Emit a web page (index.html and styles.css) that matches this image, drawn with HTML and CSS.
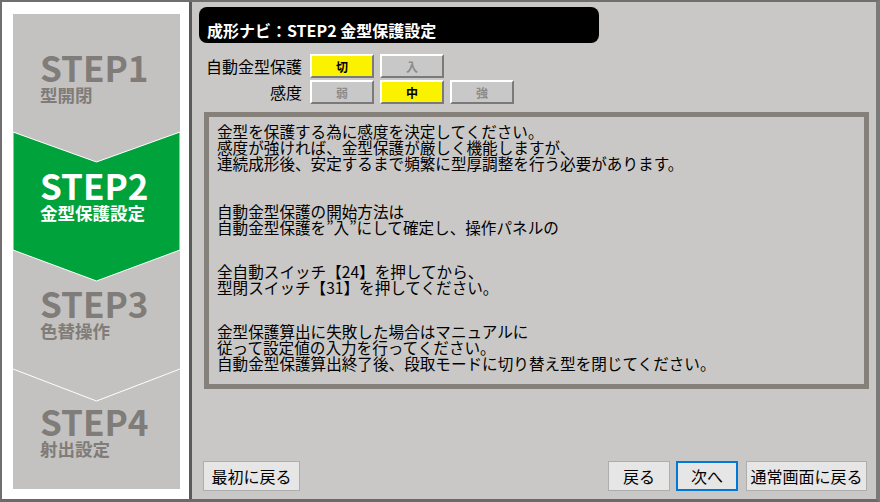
FILE: index.html
```html
<!DOCTYPE html>
<html lang="ja">
<head>
    <meta charset="UTF-8">
    <title>成形ナビ</title>
    <link rel="stylesheet" href="styles.css">
</head>
<body>
<div class="screen">
    <div class="side">
        <div class="steps">
            <svg class="steps-bg" width="167" height="475" viewBox="0 0 167 475">
                <polygon points="0,118 83.5,148 167,118 167,236 83.5,267 0,236" fill="#00a23b" stroke="#ffffff" stroke-width="1"/>
                <polyline points="0,355 83.5,387 167,355" fill="none" stroke="#ffffff" stroke-width="1"/>
            </svg>
            <div class="step">
                <div class="step-no">STEP1</div>
                <div class="step-name">型開閉</div>
            </div>
            <div class="step active">
                <div class="step-no">STEP2</div>
                <div class="step-name">金型保護設定</div>
            </div>
            <div class="step">
                <div class="step-no">STEP3</div>
                <div class="step-name">色替操作</div>
            </div>
            <div class="step">
                <div class="step-no">STEP4</div>
                <div class="step-name">射出設定</div>
            </div>
        </div>
    </div>

    <div class="main">
        <div class="title-bar">成形ナビ：STEP2 金型保護設定</div>

        <div class="options">
            <div class="opt-row">
                <span class="opt-label">自動金型保護</span>
                <button class="opt on">切</button>
                <button class="opt">入</button>
            </div>
            <div class="opt-row">
                <span class="opt-label">感度</span>
                <button class="opt">弱</button>
                <button class="opt on">中</button>
                <button class="opt">強</button>
            </div>
        </div>

        <div class="guide">
            <p>金型を保護する為に感度を決定してください。<br>感度が強ければ、金型保護が厳しく機能しますが、<br>連続成形後、安定するまで頻繁に型厚調整を行う必要があります。</p>
            <p class="gap1">自動金型保護の開始方法は<br>自動金型保護を”入”にして確定し、操作パネルの</p>
            <p class="gap2">全自動スイッチ【24】を押してから、<br>型閉スイッチ【31】を押してください。</p>
            <p class="gap2">金型保護算出に失敗した場合はマニュアルに<br>従って設定値の入力を行ってください。<br>自動金型保護算出終了後、段取モードに切り替え型を閉じてください。</p>
        </div>

        <div class="footer">
            <button class="nav-btn first">最初に戻る</button>
            <div class="nav-right">
                <button class="nav-btn back">戻る</button>
                <button class="nav-btn next">次へ</button>
                <button class="nav-btn home">通常画面に戻る</button>
            </div>
        </div>
    </div>
</div>
</body>
</html>
```

FILE: styles.css
```css
html, body { margin: 0; padding: 0; }
body { font-family: "Noto Sans CJK JP", "Noto Sans", sans-serif; background: #c9c8c6; }

.screen { width: 874px; height: 497px; display: flex; border-top: 2px solid #6f6f6f; border-left: 2px solid #6f6f6f; border-bottom: 3px solid #6a6a6a; border-right: 4px solid #7a7a7a; }

.side { width: 167px; background: #ffffff; padding: 12px 9px 10px 11px; flex-shrink: 0; }
.steps { position: relative; width: 167px; height: 438px; padding-top: 37px; background: #c4c2c0; }
.steps-bg { position: absolute; top: 0; left: 0; }
.step { position: relative; height: 118px; padding-left: 27px; color: #7f7c79; }
.step.active { color: #ffffff; }
.step-no { font-weight: bold; font-size: 35px; line-height: 32px; letter-spacing: 0; }
.step-name { font-weight: bold; font-size: 17.5px; line-height: 18px; margin-top: 3px; }

.main { flex: 1; display: flex; flex-direction: column; border-left: 3px solid #5a5a5a; background: #c9c8c6; }

.title-bar { margin: 5px 0 0 7px; width: 392px; height: 23px; padding: 13px 0 0 8px; background: #000000; color: #ffffff; border-radius: 8px; font-weight: bold; font-size: 16px; line-height: 20px; }

.options { margin: 11px 0 0 7px; display: flex; flex-direction: column; gap: 2px; }
.opt-row { display: flex; align-items: center; }
.opt-label { width: 103px; text-align: right; margin-right: 8px; font-size: 16px; color: #000000; }
.opt { width: 64px; height: 24px; margin-right: 6px; padding: 0; background: #c8c8c8; color: #8c8c8c; font-family: inherit; font-weight: bold; font-size: 12px; border: 2px solid; border-color: #ffffff #7a7a7a #7a7a7a #ffffff; }
.opt.on { background: #fbf200; color: #000000; }

.guide { margin: 8px 7px 0 12px; height: 261px; border: 5px solid #858079; padding: 6px 8px 0; font-size: 15.6px; line-height: 16px; color: #000000; }
.guide p { margin: 0; }
.guide .gap1 { margin-top: 32px; }
.guide .gap2 { margin-top: 28px; }

.footer { margin-top: auto; display: flex; justify-content: space-between; padding: 0 9px 8px 11px; }
.nav-right { display: flex; gap: 6px; }
.nav-btn { height: 30px; padding: 0; background: #e6e6e6; border: 1px solid #adadad; font-family: inherit; font-size: 16px; color: #000000; }
.nav-btn.first { width: 97px; }
.nav-btn.back { width: 62px; }
.nav-btn.next { width: 62px; border: 2px solid #0078d7; }
.nav-btn.home { width: 121px; margin-left: 2px; }
```
